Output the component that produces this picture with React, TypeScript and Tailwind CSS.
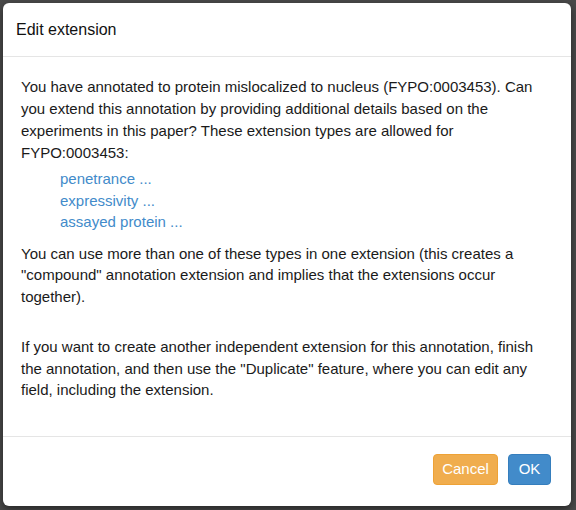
import React from 'react';

const EXT_TYPES = ['penetrance ...', 'expressivity ...', 'assayed protein ...'];

export default function App() {
  return (
    <div
      className="w-[576px] h-[510px] bg-[#4a4a4a] pt-[3px] pl-[3px] overflow-hidden"
      style={{ fontFamily: '"Liberation Sans", Arial, sans-serif' }}
    >
      <div className="w-[568px] h-[503px] bg-white rounded-[6px] shadow-[0_3px_9px_rgba(0,0,0,0.5)] flex flex-col text-[#1a1a1a]">
        {/* header */}
        <div className="h-[54px] flex items-center px-[13px] border-b border-[#e5e5e5]">
          <h4 className="text-[16px] leading-none text-[#111]">Edit extension</h4>
        </div>

        {/* body */}
        <div className="flex-1 pl-[18px] pr-[17px] pt-[19px] text-[15px] leading-[22px]">
          <p>
            You have annotated to protein mislocalized to nucleus (FYPO:0003453). Can you extend
            this annotation by providing additional details based on the experiments in this
            paper? These extension types are allowed for FYPO:0003453:
          </p>
          <ul className="mt-[4px] pl-[39px] leading-[21.5px]">
            {EXT_TYPES.map(t => (
              <li key={t}>
                <a className="text-[#428bca] cursor-pointer">{t}</a>
              </li>
            ))}
          </ul>
          <p className="mt-[10px] leading-[21.5px]">
            You can use more than one of these types in one extension (this creates a
            "compound" annotation extension and implies that the extensions occur together).
          </p>
          <p className="mt-[29px] leading-[21.5px]">
            If you want to create another independent extension for this annotation, finish
            the annotation, and then use the "Duplicate" feature, where you can edit any field,
            including the extension.
          </p>
        </div>

        {/* footer */}
        <div className="h-[70px] border-t border-[#e5e5e5] flex items-start justify-end gap-[10px] pt-[17px] pr-[20px]">
          <button className="h-[31px] w-[65px] rounded-[4px] bg-[#f0ad4e] border border-[#eea236] text-white text-[15px]">
            Cancel
          </button>
          <button className="h-[31px] w-[43px] rounded-[4px] bg-[#428bca] border border-[#357ebd] text-white text-[15px]">
            OK
          </button>
        </div>
      </div>
    </div>
  );
}
